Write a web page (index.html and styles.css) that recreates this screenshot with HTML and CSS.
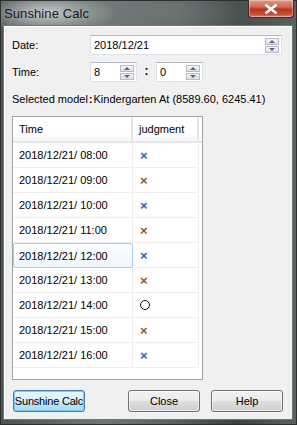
FILE: index.html
```html
<!DOCTYPE html>
<html>
<head>
<meta charset="utf-8">
<title>Sunshine Calc</title>
<link rel="stylesheet" href="styles.css">
</head>
<body>
<div class="window">
  <div class="titlebar">
    <span class="title">Sunshine Calc</span>
    <div class="close-btn">
      <svg width="14" height="10" viewBox="0 0 14 10"><path d="M2.5 1.5 L11.5 8.5 M11.5 1.5 L2.5 8.5" stroke="#fff" stroke-width="2.6" stroke-linecap="square"/></svg>
    </div>
  </div>
  <div class="client">
    <div class="form-row">
      <span class="label">Date:</span>
      <div class="spin-input date-input">
        <span class="value">2018/12/21</span>
        <div class="spinner">
          <div class="spin-btn"><span class="arrow up"></span></div>
          <div class="spin-btn"><span class="arrow down"></span></div>
        </div>
      </div>
    </div>
    <div class="form-row time-row">
      <span class="label">Time:</span>
      <div class="spin-input time-input">
        <span class="value">8</span>
        <div class="spinner">
          <div class="spin-btn"><span class="arrow up"></span></div>
          <div class="spin-btn"><span class="arrow down"></span></div>
        </div>
      </div>
      <span class="colon">:</span>
      <div class="spin-input time-input">
        <span class="value">0</span>
        <div class="spinner">
          <div class="spin-btn"><span class="arrow up"></span></div>
          <div class="spin-btn"><span class="arrow down"></span></div>
        </div>
      </div>
    </div>
    <div class="model">Selected model<span class="model-colon">:</span>Kindergarten At (8589.60, 6245.41)</div>
    <div class="list">
      <div class="list-head">
        <div class="hcell">Time</div>
        <div class="hcell">judgment</div>
      </div>
      <div class="list-row"><div class="cell">2018/12/21/ 08:00</div><div class="cell mark blue">×</div></div>
      <div class="list-row"><div class="cell">2018/12/21/ 09:00</div><div class="cell mark brown">×</div></div>
      <div class="list-row"><div class="cell">2018/12/21/ 10:00</div><div class="cell mark blue">×</div></div>
      <div class="list-row"><div class="cell">2018/12/21/ 11:00</div><div class="cell mark brown">×</div></div>
      <div class="list-row"><div class="cell selected">2018/12/21/ 12:00</div><div class="cell mark blue">×</div></div>
      <div class="list-row"><div class="cell">2018/12/21/ 13:00</div><div class="cell mark brown">×</div></div>
      <div class="list-row"><div class="cell">2018/12/21/ 14:00</div><div class="cell mark"><span class="circle"></span></div></div>
      <div class="list-row"><div class="cell">2018/12/21/ 15:00</div><div class="cell mark brown">×</div></div>
      <div class="list-row"><div class="cell">2018/12/21/ 16:00</div><div class="cell mark blue">×</div></div>
    </div>
    <div class="buttons">
      <button class="btn focused">Sunshine Calc</button>
      <div class="btn-group">
        <button class="btn">Close</button>
        <button class="btn">Help</button>
      </div>
    </div>
  </div>
</div>
</body>
</html>
```
FILE: styles.css
```css
html, body {
  margin: 0;
  padding: 0;
  background: #3f4746;
}
.window {
  width: 297px;
  height: 425px;
  box-sizing: border-box;
  padding: 0 3px 4px 2px;
  display: flex;
  flex-direction: column;
  font-family: "Liberation Sans", Arial, sans-serif;
  font-size: 11px;
  color: #000;
  background:
    radial-gradient(ellipse 70px 22px at 45px 12px, rgba(205,210,209,0.95), rgba(205,210,209,0) 100%),
    radial-gradient(ellipse 120px 40px at 170px 10px, rgba(120,130,128,0.6), rgba(120,130,128,0) 100%),
    linear-gradient(90deg, #4c5554 0%, #6e7776 35%, #566060 60%, #3a4241 80%, #5a6362 100%);
  border: 1px solid #2b3130;
}
.titlebar {
  height: 24px;
  flex: none;
  display: flex;
  justify-content: space-between;
  align-items: flex-start;
}
.title {
  font-size: 13px;
  color: #18182e;
  padding: 5px 0 0 1px;
  letter-spacing: 0.1px;
}
.close-btn {
  width: 46px;
  height: 18px;
  margin-top: -1px;
  margin-right: -1px;
  box-sizing: border-box;
  border: 1px solid #4a2a28;
  border-top: none;
  border-radius: 0 0 4px 4px;
  background: linear-gradient(180deg, #e29a8e 0%, #d06a58 40%, #b9361f 55%, #c8513a 85%, #de8a70 100%);
  box-shadow: inset 0 0 0 1px rgba(255,255,255,0.35);
  display: flex;
  align-items: center;
  justify-content: center;
}
.client {
  flex: 1;
  background: #f0f0f0;
  border: 1px solid #6e7877;
  box-shadow: inset 1px 1px 0 #ffffff;
  padding: 9px 10px 0 8px;
  display: flex;
  flex-direction: column;
}
.form-row {
  display: flex;
  align-items: center;
  height: 20px;
}
.time-row {
  margin-top: 7px;
}
.label {
  width: 78px;
  flex: none;
}
.spin-input {
  height: 20px;
  box-sizing: border-box;
  background: #fff;
  border: 1px solid #dde2e8;
  border-top-color: #b5bac1;
  display: flex;
  align-items: center;
  justify-content: space-between;
  padding: 0 2px 0 3px;
}
.date-input {
  width: 192px;
}
.time-input {
  width: 47px;
}
.value {
  color: #000;
}
.colon {
  width: 19px;
  text-align: center;
  font-weight: bold;
  font-size: 12px;
  margin-top: -3px;
}
.spinner {
  display: flex;
  flex-direction: column;
  gap: 1px;
}
.spin-btn {
  width: 14px;
  height: 7px;
  box-sizing: border-box;
  border: 1px solid #b8bcc2;
  background: linear-gradient(180deg, #f6f6f6, #dedede);
  display: flex;
  align-items: center;
  justify-content: center;
}
.arrow {
  width: 0;
  height: 0;
  border-left: 3px solid transparent;
  border-right: 3px solid transparent;
}
.arrow.up {
  border-bottom: 3px solid #4a62a0;
}
.arrow.down {
  border-top: 3px solid #4a62a0;
}
.model {
  margin-top: 10px;
  line-height: 14px;
  height: 14px;
}
.model-colon {
  font-weight: bold;
  margin: 0 1px;
}
.list {
  margin-top: 10px;
  width: 191px;
  height: 264px;
  box-sizing: border-box;
  background: #fff;
  border: 1px solid #a3a3a3;
  display: flex;
  flex-direction: column;
}
.list-head {
  display: grid;
  grid-template-columns: 120px 66px;
  height: 26px;
  flex: none;
  background: linear-gradient(180deg, #ffffff 0%, #ffffff 70%, #f4f5f6 100%);
  border-bottom: 2px solid #e6e7e8;
  box-sizing: border-box;
}
.hcell {
  display: flex;
  align-items: center;
  padding-left: 6px;
  border-right: 2px solid #e3e4e5;
}
.list-row {
  display: grid;
  grid-template-columns: 120px 66px;
  height: 25px;
  flex: none;
}
.cell {
  display: flex;
  align-items: center;
  padding-left: 6px;
  border-right: 1px solid #eeeeee;
  border-bottom: 1px solid #eeeeee;
  box-sizing: border-box;
}
.cell.selected {
  border: 1px solid #a9cdf1;
  border-radius: 2px;
  padding-left: 5px;
  background: linear-gradient(180deg, #fbfdff 0%, #eef6fe 100%);
}
.mark {
  padding-left: 7px;
  font-size: 13px;
  font-weight: bold;
}
.mark.blue {
  color: #2f5fb4;
}
.mark.brown {
  color: #8a5a28;
}
.circle {
  width: 10px;
  height: 10px;
  box-sizing: border-box;
  border: 1px solid #111;
  border-radius: 50%;
}
.buttons {
  margin-top: 10px;
  display: flex;
  justify-content: space-between;
  padding-left: 1px;
  margin-right: -1px;
}
.btn-group {
  display: flex;
  gap: 11px;
}
.btn {
  width: 72px;
  height: 22px;
  box-sizing: border-box;
  font-family: "Liberation Sans", Arial, sans-serif;
  font-size: 11px;
  color: #000;
  padding: 0;
  white-space: nowrap;
  border: 1px solid #707070;
  border-radius: 3px;
  background: linear-gradient(180deg, #f2f2f2 0%, #ebebeb 48%, #dddddd 52%, #cfcfcf 100%);
  box-shadow: inset 0 0 0 1px rgba(255,255,255,0.6);
}
.btn.focused {
  letter-spacing: -0.2px;
  border-color: #3c7fb1;
  background: linear-gradient(180deg, #eaf6fd 0%, #d9f0fc 48%, #bee6fd 52%, #a7d9f5 100%);
  box-shadow: inset 0 0 0 1px #7dcaf0;
}
```
